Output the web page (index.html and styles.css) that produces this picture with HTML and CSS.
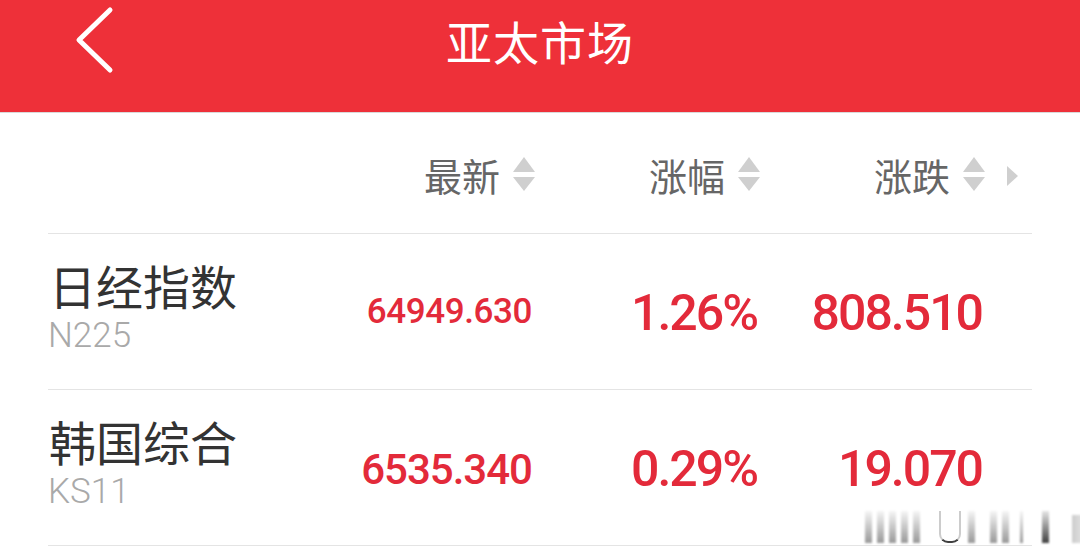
FILE: index.html
```html
<!DOCTYPE html>
<html lang="zh-CN">
<head>
    <meta charset="UTF-8">
    <meta name="viewport" content="width=device-width, initial-scale=1.0">
    <title>亚太市场</title>
    <link rel="stylesheet" href="styles.css">
</head>
<body>
    <header class="topbar">
        <a class="back" href="#">
            <svg width="50" height="80" viewBox="0 0 50 80">
                <polyline points="40,10 9,40 40,70" fill="none" stroke="#fff" stroke-width="5" stroke-linecap="round" stroke-linejoin="round"/>
            </svg>
        </a>
        <h1 class="title">亚太市场</h1>
        <span></span>
    </header>

    <div class="market">
        <div class="head-row">
            <div></div>
            <div class="sort">最新<span class="sort-icon"></span></div>
            <div class="sort">涨幅<span class="sort-icon"></span></div>
            <div class="sort">涨跌<span class="sort-icon"></span></div>
            <div class="more"><span class="more-arrow"></span></div>
        </div>

        <div class="quote-row">
            <div class="name">
                <div class="cn">日经指数</div>
                <div class="code">N225</div>
            </div>
            <div class="val price">64949.630</div>
            <div class="val big">1.26%</div>
            <div class="val big">808.510</div>
            <div></div>
        </div>

        <div class="quote-row">
            <div class="name">
                <div class="cn">韩国综合</div>
                <div class="code">KS11</div>
            </div>
            <div class="val mid">6535.340</div>
            <div class="val big">0.29%</div>
            <div class="val big">19.070</div>
            <div></div>
        </div>

        <div class="watermark">
            <span class="wm"></span><span class="wm"></span><span class="wm"></span><span class="wm"></span><span class="wm"></span>
            <span class="wm cup"></span>
            <span class="wm"></span><span class="wm spaced"></span><span class="wm"></span><span class="wm thin"></span><span class="wm dark"></span>
            <span class="wm wide"></span>
        </div>
    </div>
</body>
</html>
```

FILE: styles.css
```css
body {
    margin: 0;
    background: #fff;
    font-family: "Noto Sans CJK SC", "Noto Sans", sans-serif;
}

.topbar {
    display: grid;
    grid-template-columns: 1fr auto 1fr;
    align-items: center;
    height: 78px;
    padding-bottom: 34px;
    background: #ee3039;
    border-bottom: 1px solid #d9d9d9;
}
.back {
    display: flex;
    padding-left: 70px;
}
.title {
    margin: 0;
    color: #fff;
    font-size: 46px;
    font-weight: 400;
    letter-spacing: 1px;
}

.market {
    position: relative;
    padding: 0 48px;
}
.head-row,
.quote-row {
    display: grid;
    grid-template-columns: 1fr 225px 225px 225px 47px;
    align-items: center;
    border-bottom: 1px solid #e4e4e4;
}
.head-row {
    height: 120px;
}
.quote-row {
    height: 155px;
}

.sort {
    display: flex;
    justify-content: flex-end;
    align-items: center;
    gap: 13px;
    color: #666;
    font-size: 38px;
    margin-top: 2px;
}
.sort-icon {
    display: flex;
    flex-direction: column;
    gap: 5px;
    width: 22px;
}
.sort-icon::before,
.sort-icon::after {
    content: "";
    border-left: 11px solid transparent;
    border-right: 11px solid transparent;
}
.sort-icon::before {
    border-bottom: 15px solid #cfcfcf;
}
.sort-icon::after {
    border-top: 14px solid #cfcfcf;
}
.more {
    display: flex;
    padding-left: 22px;
    margin-top: 6px;
}
.more-arrow {
    border-left: 11px solid #cfcfcf;
    border-top: 10px solid transparent;
    border-bottom: 10px solid transparent;
}

.name {
    align-self: start;
    padding-top: 27px;
}
.name .cn {
    color: #333;
    font-size: 47px;
    line-height: 47px;
    padding-left: 1px;
}
.name .code {
    margin-top: 10px;
    color: #a9a9a9;
    font-family: Roboto, "Liberation Sans", sans-serif;
    font-size: 35px;
    font-weight: 300;
    line-height: 36px;
}

.val {
    text-align: right;
    padding-right: 3px;
    color: #e32a3a;
    font-family: Roboto, "Liberation Sans", sans-serif;
    font-weight: 500;
}
.price {
    font-size: 35px;
    letter-spacing: -0.4px;
}
.mid {
    font-size: 42px;
    letter-spacing: -1px;
    margin-top: 4px;
}
.big {
    font-size: 50px;
    letter-spacing: -2px;
    margin-top: 2px;
}

/* faded stamp in the lower right corner */
.watermark {
    position: absolute;
    left: 865px;
    top: 395px;
    display: flex;
    align-items: flex-end;
    gap: 5px;
    height: 35px;
}
.wm {
    width: 7px;
    height: 32px;
    background: linear-gradient(to bottom, rgba(0,0,0,0.04), rgba(0,0,0,0.4));
    filter: blur(1px);
}
.wm.spaced {
    margin-left: 10px;
}
.wm.thin {
    width: 3px;
    margin-left: 6px;
}
.wm.dark {
    margin-left: 14px;
    background: linear-gradient(to bottom, rgba(0,0,0,0.1), rgba(0,0,0,0.75));
}
.wm.cup {
    width: 18px;
    height: 30px;
    margin: 0 2px 0 14px;
    background: none;
    border: 2px solid rgba(0,0,0,0.2);
    border-top: none;
    border-bottom-color: rgba(0,0,0,0.75);
    border-radius: 0 0 9px 9px;
    filter: none;
}
.wm.wide {
    width: 22px;
    height: 28px;
    margin-left: 18px;
    background: linear-gradient(to right, rgba(0,0,0,0.2), rgba(0,0,0,0.03));
}
```
